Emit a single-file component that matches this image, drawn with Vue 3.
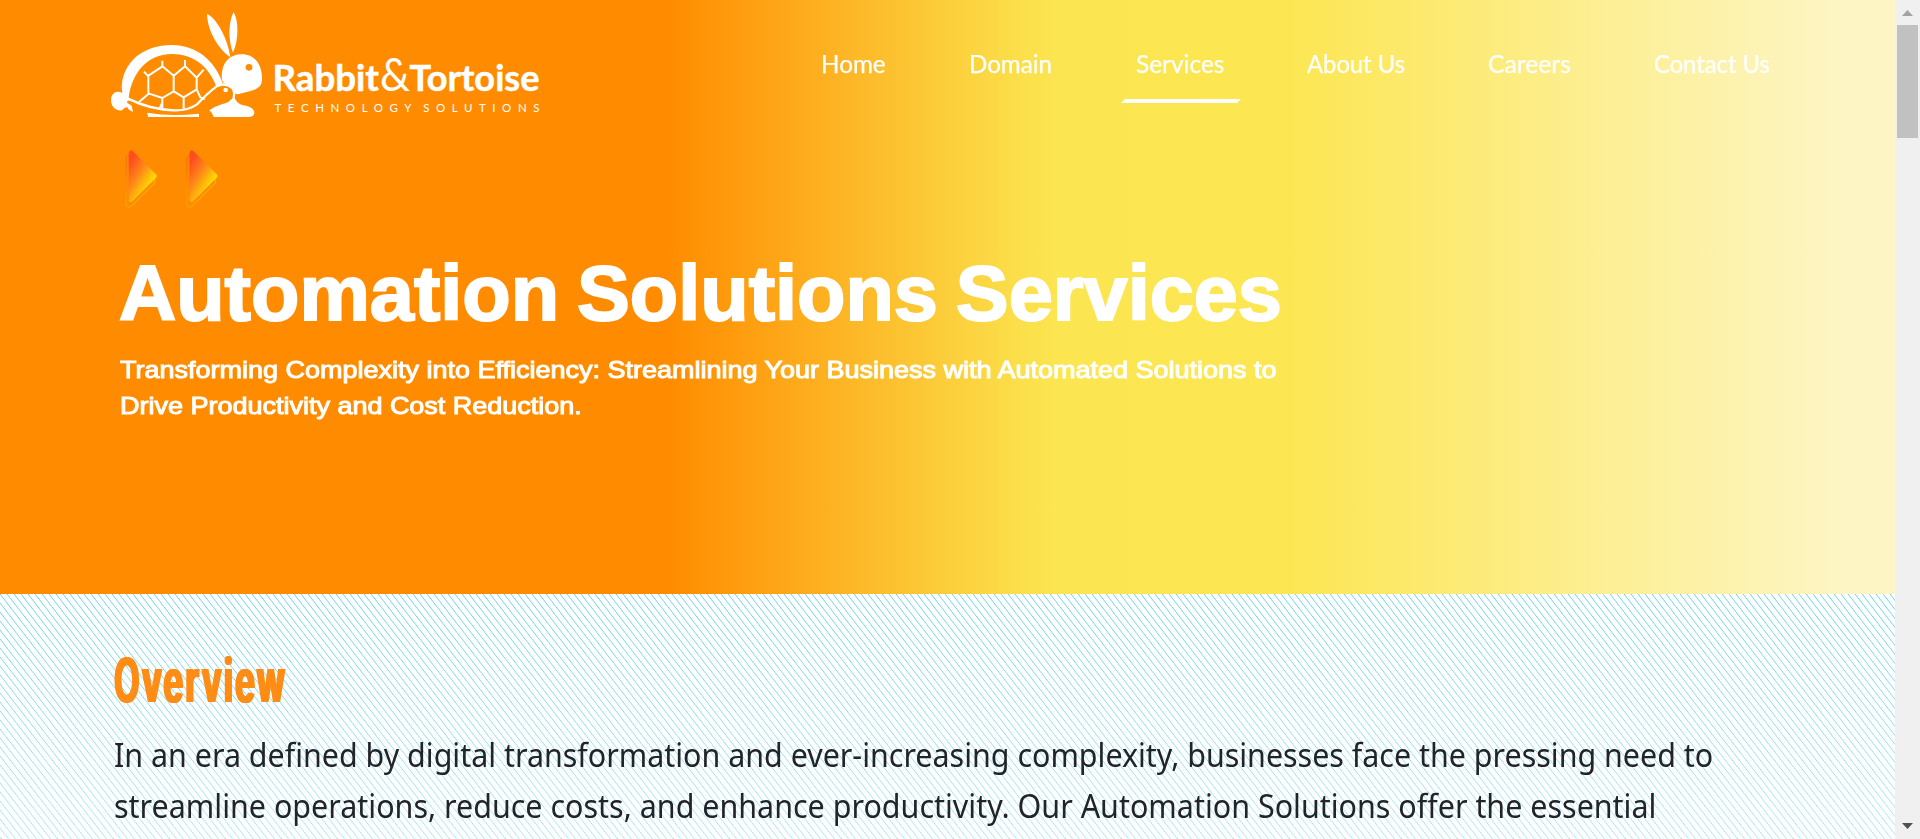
<script setup>
const links = [
  { label: 'Home', width: 65 },
  { label: 'Domain', width: 83 },
  { label: 'Services', width: 88, active: true },
  { label: 'About Us', width: 98 },
  { label: 'Careers', width: 83 },
  { label: 'Contact Us', width: 116 }
]

// Stretches a line of text horizontally to an exact width.
const vFit = {
  mounted(el, { value }) {
    el.style.transform = `scaleX(${value / el.offsetWidth})`
    el.style.marginRight = `${value - el.offsetWidth}px`
  }
}
</script>

<template>
  <div class="window">
    <div class="page">
      <section class="hero">
        <header class="header">
          <svg class="logo" viewBox="0 0 460 130" width="460" height="130" role="img">
            <g transform="scale(.33333)" fill="#fff">
              <path d="M65 262C68 185 130 135 215 135C292 135 346 185 368 250L349 260C328 200 280 162 215 162C140 162 96 220 86 293L93 300L82 303C82 316 72 328 63 332C45 331 33 318 33 300C33 284 43 274 57 275Q64 275 67 280Z" />
              <path d="M53 316L79 307L95 317L99 336L87 329L82 322L64 324Z" />
              <path d="M84 296Q150 329 223 331Q264 332 291 313Q325 277 350 259Q375 246 397 264Q405 275 401 294" fill="none" stroke="#fff" stroke-width="7" />
              <path d="M142 338Q210 351 297 341V351H144Z" />
              <path d="M328 331Q343 320 365 313Q389 308 401 290L411 305Q420 315 438 317Q463 323 463 339Q462 351 444 351H341Q339 340 328 331Z" />
              <path d="M366 240C361 197 382 165 421 163C464 160 486 195 486 233C488 263 467 269 444 275L413 283L403 280Q402 256 371 250Z" />
              <path d="M391 171C370 160 323 106 321 42C347 52 383 112 391 171ZM399 158C384 120 385 65 401 36C416 63 417 118 399 158Z" />
              <circle cx="447" cy="202" r="10" fill="#ff8c00" />
              <circle cx="377" cy="270" r="7" />
              <path d="M117 306L145 282V229L132 215M142 229L187 199L221 227L255 199L290 233V268L251 292L221 274L187 294L145 280M187 199V182M255 199V180M290 233L311 209M221 227V276M187 292V325M187 308L177 329M251 290V326M290 268L301 292L314 297" fill="none" stroke="#fff" stroke-width="6" stroke-linejoin="round" />
            </g>
            <g fill="#fff" font-family="Lato, sans-serif">
              <text x="172.500" y="91" font-size="36" font-weight="700" stroke="#fff" stroke-width=".5" textLength="106.500" lengthAdjust="spacingAndGlyphs">Rabbit</text>
              <text x="280" y="91" font-size="47" font-weight="400" textLength="30" lengthAdjust="spacingAndGlyphs">&amp;</text>
              <text x="309.500" y="91" font-size="36" font-weight="700" stroke="#fff" stroke-width=".5" textLength="130" lengthAdjust="spacingAndGlyphs">Tortoise</text>
              <text x="174.500" y="112" font-size="11.500" font-weight="400" textLength="265" word-spacing="-4">TECHNOLOGY SOLUTIONS</text>
            </g>
          </svg>
          <nav class="nav">
            <a v-for="l in links" :key="l.label" class="link" :class="{ active: l.active }"><span v-fit="l.width" class="line">{{ l.label }}</span></a>
          </nav>
        </header>

        <svg class="arrows" width="110" height="70" viewBox="0 0 110 70">
          <defs>
            <linearGradient id="flame" gradientUnits="userSpaceOnUse" x1="6" y1="18" x2="31" y2="34">
              <stop offset="0" stop-color="#ff4c20" />
              <stop offset=".5" stop-color="#ff8a18" />
              <stop offset="1" stop-color="#ffdc00" />
            </linearGradient>
            <linearGradient id="rim" gradientUnits="userSpaceOnUse" x1="3" y1="20" x2="31" y2="42">
              <stop offset="0" stop-color="#f96c10" />
              <stop offset="1" stop-color="#ffbd00" />
            </linearGradient>
          </defs>
          <g v-for="n in 2" :key="n" :transform="`translate(${(n - 1) * 60.7 + .7} 0)`">
            <path d="M5.500 12H4Q2.500 12 2.500 14V60Q3 65 8 62L31 39V35" fill="none" stroke="url(#rim)" stroke-width="1" />
            <path d="M5 9Q6 5 9 7L32 30Q34 32 32 34L9 57Q6 60 5 56Z" fill="url(#flame)" />
          </g>
        </svg>

        <h1><span v-fit="1163" class="line">Automation Solutions Services</span></h1>
        <p class="lead">
          <span v-fit="1157" class="line">Transforming Complexity into Efficiency: Streamlining Your Business with Automated Solutions to</span><br>
          <span v-fit="462" class="line">Drive Productivity and Cost Reduction.</span>
        </p>
      </section>

      <section class="overview">
        <svg class="hatch" width="100%" height="245">
          <defs>
            <pattern id="stripes" width="7" height="9" patternUnits="userSpaceOnUse">
              <path d="M-7 -9L14 18M-7 0L7 18M0 -9L14 9" stroke="#66d6f8" stroke-width="1" />
            </pattern>
            <linearGradient id="fade" x2="0" y2="1">
              <stop offset="0" stop-color="#fff" />
              <stop offset="1" stop-color="#888" />
            </linearGradient>
            <mask id="veil"><rect width="100%" height="100%" fill="url(#fade)" /></mask>
          </defs>
          <rect width="100%" height="100%" fill="url(#stripes)" mask="url(#veil)" />
        </svg>
        <h2><span v-fit="173" class="line">Overview</span></h2>
        <p class="body">
          <span v-fit="1599" class="line">In an era defined by digital transformation and ever-increasing complexity, businesses face the pressing need to</span><br>
          <span v-fit="1542" class="line">streamline operations, reduce costs, and enhance productivity. Our Automation Solutions offer the essential</span>
        </p>
      </section>
    </div>

    <aside class="scrollbar">
      <svg width="11" height="6"><path d="M0 6L5.500 0L11 6Z" fill="#a3a3a3" /></svg>
      <div class="thumb"></div>
      <svg class="down" width="11" height="6"><path d="M0 0L5.500 6L11 0Z" fill="#505050" /></svg>
    </aside>
  </div>
</template>

<style>
html, body { overflow: hidden; }
</style>

<style scoped>
.window { display: flex; width: 1920px; height: 839px; overflow: hidden; }
.page { width: 1895px; display: flex; flex-direction: column; }
.line { display: inline-block; white-space: nowrap; transform-origin: 0 50%; }
.hero {
  height: 594px;
  box-sizing: border-box;
  flex: none;
  color: #fff;
  background: linear-gradient(90deg, #ff8c00 35.3%, #fbe04b 54%, #fbe651 56%, #fce651 67.5%, #fdf5c4 97%);
}
.header { display: flex; height: 130px; padding-left: 103px; }
.logo { flex: none; margin-left: -3px; }
.nav { display: flex; gap: 83.2px; margin-left: 261px; padding-top: 47px; }
.link { position: relative; font: 400 25px/32px Lato, sans-serif; -webkit-text-stroke: .25px #fff; }
.link.active { left: 1px; }
.link.active::after {
  content: "";
  position: absolute;
  left: -15px;
  top: 52px;
  width: 120px;
  height: 4px;
  background: #fff;
  clip-path: polygon(4px 0, 100% 0, 116px 100%, 0 100%);
}
.arrows { display: block; margin: 14px 0 0 123px; }
h1 {
  margin: 31px 0 0 119px;
  font: 700 78px/96px "Liberation Sans", Arial, sans-serif;
  word-spacing: -4px;
  -webkit-text-stroke: 2px #fff;
}
.lead {
  margin: 11px 0 0 120px;
  font: 400 24px/36px "Liberation Sans", Arial, sans-serif;
  -webkit-text-stroke: 1px #fff;
}
.overview { position: relative; flex: 1; padding-left: 114px; background: #fff; }
.hatch { position: absolute; left: 0; top: 0; }
h2 {
  position: relative;
  margin: 50px 0 0;
  font: 700 60px/72px Inter, sans-serif;
  letter-spacing: 4px;
  color: #ff8c14;
  text-shadow: 2px 0 #ff8c14, -2px 0 #ff8c14;
}
.body {
  position: relative;
  margin: 13px 0 0;
  font: 400 33px/51px "Noto Sans", sans-serif;
  color: #212529;
}
.scrollbar {
  width: 25px;
  box-sizing: border-box;
  padding: 10px 0;
  display: flex;
  flex-direction: column;
  align-items: center;
  background: #f0f0f0;
}
.thumb { width: 21px; height: 113px; margin-top: 9px; background: #c1c1c1; }
.down { margin-top: auto; }
</style>
